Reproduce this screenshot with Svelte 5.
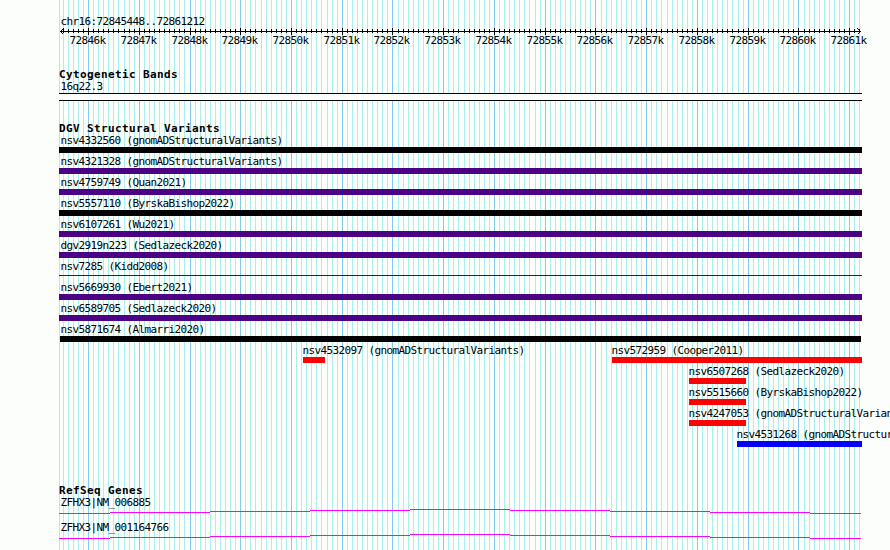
<script lang="ts">
	const start = 72845448;
	const stop = 72861212;
	const left = 60;
	const panelWidth = 800;

	const toX = (bp: number) => Math.round(left + ((bp - start) * panelWidth) / (stop - start + 1));

	// one line every 100 bp, a stronger one every 1000 bp
	const grid = [];
	for (let bp = Math.ceil(start / 100) * 100; bp <= stop; bp += 100) {
		grid.push({ bp, x: toX(bp), major: bp % 1000 === 0 });
	}

	const variants = [
		[{ name: 'nsv4332560 (gnomADStructuralVariants)', x: 59, end: 862, kind: 'complex' }],
		[{ name: 'nsv4321328 (gnomADStructuralVariants)', x: 59, end: 862, kind: 'inversion' }],
		[{ name: 'nsv4759749 (Quan2021)', x: 59, end: 862, kind: 'inversion' }],
		[{ name: 'nsv5557110 (ByrskaBishop2022)', x: 59, end: 862, kind: 'complex' }],
		[{ name: 'nsv6107261 (Wu2021)', x: 59, end: 862, kind: 'inversion' }],
		[{ name: 'dgv2919n223 (Sedlazeck2020)', x: 59, end: 862, kind: 'inversion' }],
		[{ name: 'nsv7285 (Kidd2008)', x: 59, end: 862, kind: 'inversion thin' }],
		[{ name: 'nsv5669930 (Ebert2021)', x: 59, end: 862, kind: 'inversion' }],
		[{ name: 'nsv6589705 (Sedlazeck2020)', x: 59, end: 862, kind: 'inversion' }],
		[{ name: 'nsv5871674 (Almarri2020)', x: 60, end: 861, kind: 'complex' }],
		[
			{ name: 'nsv4532097 (gnomADStructuralVariants)', x: 303, end: 325, kind: 'loss' },
			{ name: 'nsv572959 (Cooper2011)', x: 612, end: 862, kind: 'loss' }
		],
		[{ name: 'nsv6507268 (Sedlazeck2020)', x: 689, end: 746, kind: 'loss' }],
		[{ name: 'nsv5515660 (ByrskaBishop2022)', x: 689, end: 746, kind: 'loss' }],
		[{ name: 'nsv4247053 (gnomADStructuralVariants)', x: 689, end: 746, kind: 'loss' }],
		[{ name: 'nsv4531268 (gnomADStructuralVariants)', x: 737, end: 862, kind: 'gain' }]
	];

	const genes = ['ZFHX3|NM_006885', 'ZFHX3|NM_001164766'];

	// intron line climbs one pixel per step and comes down again
	const intron = [
		[59, 110, 4],
		[110, 210, 3],
		[210, 310, 2],
		[310, 410, 1],
		[410, 510, 0],
		[510, 610, 1],
		[610, 710, 2],
		[710, 810, 3],
		[810, 861, 4]
	];
</script>

<main class="browser">
	<svg class="grid" width="890" height="550" shape-rendering="crispEdges">
		<rect class="minor" x="59" y="0" width="1" height="550" />
		{#each grid as line}
			<rect class={line.major ? 'major' : 'minor'} x={line.x} y="0" width="1" height="550" />
		{/each}
	</svg>

	<section class="scale">
		<div class="label">chr16:72845448..72861212</div>
		<svg class="ruler" width="890" height="19">
			<g shape-rendering="crispEdges">
				<rect x="60" y="3" width="801" height="1" />
				{#each grid as line}
					{#if line.major}
						<rect x={line.x} y="0" width="1" height="7" />
					{:else}
						<rect x={line.x} y="1" width="1" height="4" />
					{/if}
				{/each}
				<path d="M63.5 .5L60.5 3.5L63.5 6.5M857.5 .5L860.5 3.5L857.5 6.5" />
			</g>
			{#each grid.filter((line) => line.major) as line}
				<text x={line.x - 18.5} y="16">{line.bp / 1000}k</text>
			{/each}
		</svg>
	</section>

	<section class="bands">
		<h2>Cytogenetic Bands</h2>
		<div class="label">16q22.3</div>
		<div class="band"></div>
	</section>

	<section class="variants">
		<h2>DGV Structural Variants</h2>
		{#each variants as row}
			<div class="row">
				{#each row as item}
					<div class="feature" style="margin-left: {item.x}px">
						<span class="name" class:edge={item.x === 59} class:flush={item.x === 60}>{item.name}</span>
						<div class="bar {item.kind}" style="width: {item.end - item.x}px"></div>
					</div>
				{/each}
			</div>
		{/each}
	</section>

	<section class="genes">
		<h2>RefSeq Genes</h2>
		{#each genes as gene}
			<div class="gene">
				<div class="label">{gene}</div>
				<svg width="890" height="5" shape-rendering="crispEdges">
					{#each intron as [from, to, y]}
						<rect x={from} {y} width={to - from} height="1" />
					{/each}
				</svg>
			</div>
		{/each}
	</section>
</main>

<style>
	:global(body) { margin: 0; background: #fcfefc; }
	.browser {
		position: relative;
		box-sizing: border-box;
		width: 890px;
		height: 550px;
		padding-top: 15px;
		overflow: hidden;
		color: #000;
		font: 11px/13px "DejaVu Sans Mono", monospace;
		letter-spacing: -.622px;
		white-space: nowrap;
	}
	.grid { position: absolute; top: 0; left: 0; }
	.minor { fill: #aceeec; }
	.major { fill: #84caec; }
	section { position: relative; }
	svg { display: block; }
	h2 {
		margin: 0;
		padding-left: 59px;
		font-size: 11px;
		font-weight: 700;
		line-height: 13px;
		letter-spacing: .378px;
	}
	.label { height: 12px; padding-left: 60.4px; line-height: 11px; }
	.scale .label { height: 13px; line-height: 13px; }
	.ruler path { fill: none; stroke: #000; stroke-width: 1; }
	.bands { margin-top: 21px; }
	.band {
		box-sizing: border-box;
		width: 803px;
		height: 8px;
		margin-left: 59px;
		border: solid #000;
		border-width: 1px 0;
		background: #fcfefc;
	}
	.variants { margin-top: 21px; }
	.row { display: grid; height: 21px; }
	.feature { grid-area: 1 / 1; }
	.name { display: block; height: 12px; margin-left: -.6px; line-height: 11px; }
	.name.edge { margin-left: 1.4px; }
	.name.flush { margin-left: .4px; }
	.bar { height: 6px; }
	.complex { background: #000; }
	.inversion { background: #4c0284; }
	.loss { background: #fc0204; }
	.gain { background: #0402fc; }
	.thin { height: 1px; margin-top: 2px; }
	.genes { margin-top: 34px; }
	.gene { height: 25px; }
	.gene rect { fill: #fc02fc; }
</style>
